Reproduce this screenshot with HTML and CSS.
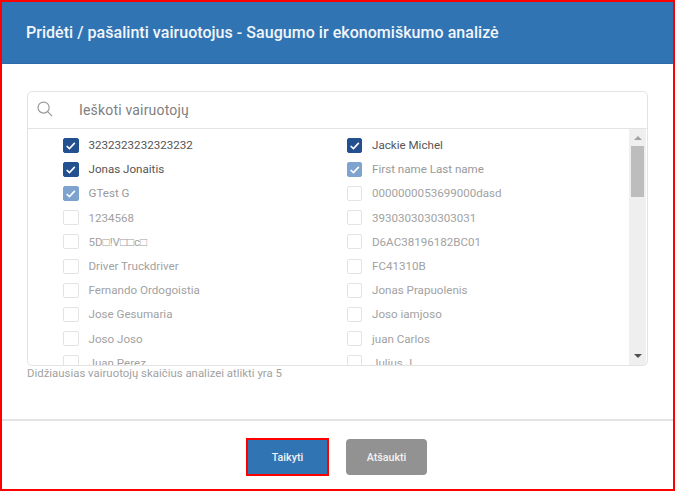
FILE: index.html
```html
<!DOCTYPE html>
<html lang="lt">
<head>
<meta charset="utf-8">
<title>Pridėti / pašalinti vairuotojus</title>
<link rel="stylesheet" href="styles.css">
</head>
<body>
<div class="dialog">
  <header class="head"><h1 class="title">Pridėti / pašalinti vairuotojus - Saugumo ir ekonomiškumo analizė</h1></header>
  <main class="body">
    <section class="panel">
      <div class="search">
        <svg class="search-icon" width="16" height="16" viewBox="0 0 17 17" fill="none" stroke="#9a9a9a" stroke-width="1.3"><circle cx="7" cy="7" r="5.9"/><path d="M11.3 11.3 16 16"/></svg>
        <span class="search-text">Ieškoti vairuotojų</span>
      </div>
      <div class="list-wrap">
        <div class="list">
          <label class="item on"><span class="box"><svg viewBox="0 0 16 16" class="tick"><path d="M3 8.6 6.4 11.8 13 4.8"/></svg></span><span>3232323232323232</span></label>
          <label class="item on"><span class="box"><svg viewBox="0 0 16 16" class="tick"><path d="M3 8.6 6.4 11.8 13 4.8"/></svg></span><span>Jackie Michel</span></label>
          <label class="item on"><span class="box"><svg viewBox="0 0 16 16" class="tick"><path d="M3 8.6 6.4 11.8 13 4.8"/></svg></span><span>Jonas Jonaitis</span></label>
          <label class="item soft"><span class="box"><svg viewBox="0 0 16 16" class="tick"><path d="M3 8.6 6.4 11.8 13 4.8"/></svg></span><span>First name Last name</span></label>
          <label class="item soft"><span class="box"><svg viewBox="0 0 16 16" class="tick"><path d="M3 8.6 6.4 11.8 13 4.8"/></svg></span><span>GTest G</span></label>
          <label class="item"><span class="box"></span><span>0000000053699000dasd</span></label>
          <label class="item"><span class="box"></span><span>1234568</span></label>
          <label class="item"><span class="box"></span><span>3930303030303031</span></label>
          <label class="item"><span class="box"></span><span>5D□!V□□c□</span></label>
          <label class="item"><span class="box"></span><span>D6AC38196182BC01</span></label>
          <label class="item"><span class="box"></span><span>Driver Truckdriver</span></label>
          <label class="item"><span class="box"></span><span>FC41310B</span></label>
          <label class="item"><span class="box"></span><span>Fernando Ordogoistia</span></label>
          <label class="item"><span class="box"></span><span>Jonas Prapuolenis</span></label>
          <label class="item"><span class="box"></span><span>Jose Gesumaria</span></label>
          <label class="item"><span class="box"></span><span>Joso iamjoso</span></label>
          <label class="item"><span class="box"></span><span>Joso Joso</span></label>
          <label class="item"><span class="box"></span><span>juan Carlos</span></label>
          <label class="item"><span class="box"></span><span>Juan Perez</span></label>
          <label class="item"><span class="box"></span><span>Julius J</span></label>
        </div>
        <div class="scrollbar">
          <span class="arrow up"></span>
          <span class="thumb"></span>
          <span class="arrow down"></span>
        </div>
      </div>
    </section>
    <p class="note">Didžiausias vairuotojų skaičius analizei atlikti yra 5</p>
  </main>
  <footer class="foot">
    <button class="btn primary">Taikyti</button>
    <button class="btn cancel">Atšaukti</button>
  </footer>
</div>
</body>
</html>
```
FILE: styles.css
```css
* { box-sizing: border-box; }
html, body { margin: 0; height: 100%; }
body { font-family: Roboto, "Liberation Sans", sans-serif; background: #fff; }
.dialog {
  width: 675px; height: 491px; border: 2px solid #f00;
  display: flex; flex-direction: column; background: #fff; overflow: hidden;
}
.head { height: 62px; background: #3174b4; border-bottom: 1px solid #2d6ca8; display: flex; align-items: center; padding-left: 24px; flex: none; }
.title { margin: 0; font-size: 16px; font-weight: 500; color: #f2f6fb; letter-spacing: 0.04px; }
.body { flex: 1; padding: 27px 25px 0; min-height: 0; }
.panel { width: 621px; height: 275px; border: 1px solid #e3e3e3; border-radius: 5px; overflow: hidden; display: flex; flex-direction: column; }
.search { height: 37px; flex: none; border-bottom: 1px solid #e3e3e3; display: flex; align-items: center; padding-left: 9px; }
.search-icon { flex: none; margin-top: -2px; }
.search-text { margin-left: 26px; font-size: 14px; color: #808080; letter-spacing: 0.18px; }
.list-wrap { flex: 1; display: flex; min-height: 0; }
.list { flex: 1; display: grid; grid-template-columns: 283.5px 1fr; grid-auto-rows: 24.2px; padding: 4px 0 0 35px; overflow: hidden; align-content: start; }
.item { display: flex; align-items: center; gap: 10px; font-size: 11.6px; color: #a2a2a2; white-space: nowrap; }
.box { width: 15.5px; height: 15px; flex: none; border: 1px solid #e3e3e3; border-radius: 2px; background: #fff; display: flex; }
.tick { width: 14px; height: 13px; fill: none; stroke: #fff; stroke-width: 2; }
.item.on { color: #555; }
.item.on .box { background: #23508f; border-color: #23508f; }
.item.soft { color: #999; }
.item.soft .box { background: #7fa3cf; border-color: #7fa3cf; }
.scrollbar { width: 17px; flex: none; background: #efefef; display: flex; flex-direction: column; align-items: center; margin-right: 1px; }
.arrow { width: 0; height: 0; border-left: 4px solid transparent; border-right: 4px solid transparent; }
.arrow.up { border-bottom: 4px solid #a3a3a3; margin-top: 7px; }
.arrow.down { border-top: 4px solid #505050; margin-top: auto; margin-bottom: 7px; }
.thumb { width: 13px; height: 51px; background: #bdbdbd; margin-top: 6px; }
.note { margin: 0; font-size: 11.4px; line-height: 14px; color: #a2a2a2; }
.foot { height: 70px; flex: none; border-top: 2px solid #e3e3e3; display: flex; justify-content: center; gap: 17px; padding: 18px 2px 0 0; margin-top: auto; }
.btn { height: 36px; border-radius: 4px; border: none; font-family: inherit; font-size: 10.7px; font-weight: 500; color: #f2f2f2; padding: 0; }
.primary { width: 83px; height: 38px; margin-top: -1px; background: #3174b4; border: 2px solid #f00; border-radius: 0; }
.cancel { width: 81px; background: #929292; }
```
